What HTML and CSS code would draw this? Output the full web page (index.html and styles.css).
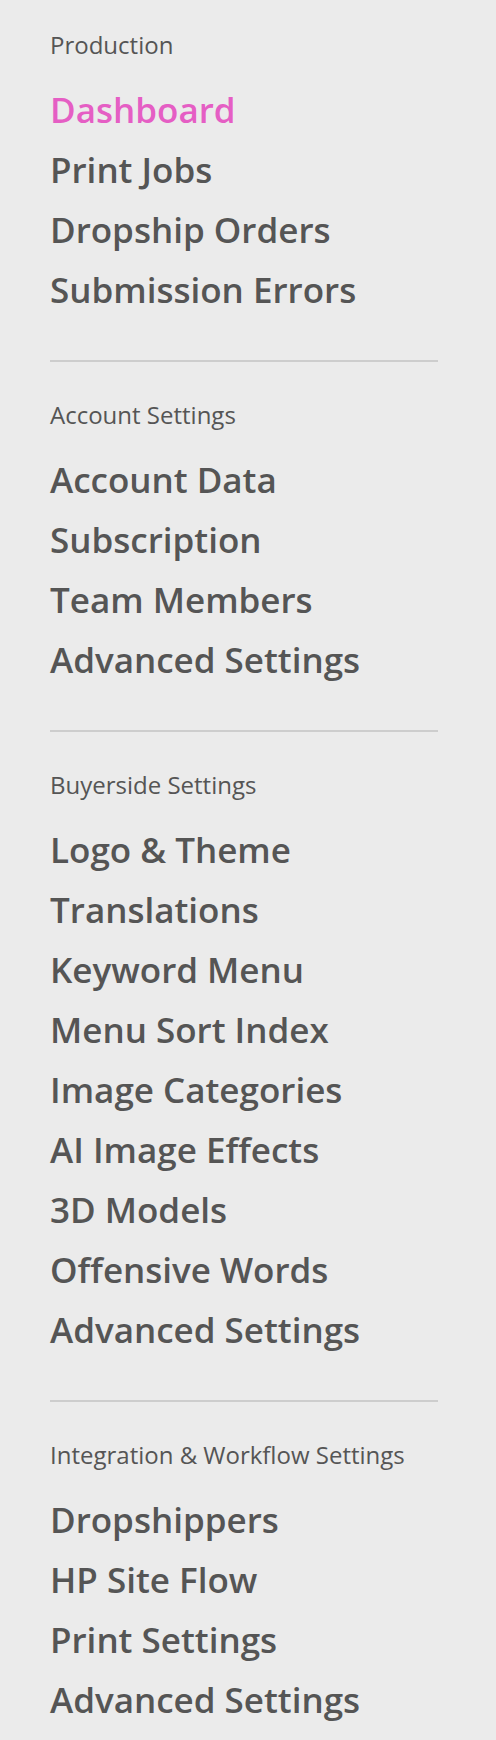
FILE: index.html
```html
<!DOCTYPE html>
<html lang="en">
<head>
<meta charset="UTF-8">
<meta name="viewport" content="width=device-width, initial-scale=1.0">
<title>Menu</title>
<link rel="stylesheet" href="styles.css">
</head>
<body>
    <nav class="sidebar">
        <section class="menu-group">
            <h2 class="menu-title">Production</h2>
            <ul class="menu-list">
                <li><a href="#" class="menu-link active">Dashboard</a></li>
                <li><a href="#" class="menu-link">Print Jobs</a></li>
                <li><a href="#" class="menu-link">Dropship Orders</a></li>
                <li><a href="#" class="menu-link">Submission Errors</a></li>
            </ul>
        </section>
        <section class="menu-group">
            <h2 class="menu-title">Account Settings</h2>
            <ul class="menu-list">
                <li><a href="#" class="menu-link">Account Data</a></li>
                <li><a href="#" class="menu-link">Subscription</a></li>
                <li><a href="#" class="menu-link">Team Members</a></li>
                <li><a href="#" class="menu-link">Advanced Settings</a></li>
            </ul>
        </section>
        <section class="menu-group">
            <h2 class="menu-title">Buyerside Settings</h2>
            <ul class="menu-list">
                <li><a href="#" class="menu-link">Logo &amp; Theme</a></li>
                <li><a href="#" class="menu-link">Translations</a></li>
                <li><a href="#" class="menu-link">Keyword Menu</a></li>
                <li><a href="#" class="menu-link">Menu Sort Index</a></li>
                <li><a href="#" class="menu-link">Image Categories</a></li>
                <li><a href="#" class="menu-link">AI Image Effects</a></li>
                <li><a href="#" class="menu-link">3D Models</a></li>
                <li><a href="#" class="menu-link">Offensive Words</a></li>
                <li><a href="#" class="menu-link">Advanced Settings</a></li>
            </ul>
        </section>
        <section class="menu-group">
            <h2 class="menu-title">Integration &amp; Workflow Settings</h2>
            <ul class="menu-list">
                <li><a href="#" class="menu-link">Dropshippers</a></li>
                <li><a href="#" class="menu-link">HP Site Flow</a></li>
                <li><a href="#" class="menu-link">Print Settings</a></li>
                <li><a href="#" class="menu-link">Advanced Settings</a></li>
            </ul>
        </section>
    </nav>
</body>
</html>
```

FILE: styles.css
```css
body {
  margin: 0;
  font-family: "Open Sans", "Noto Sans", sans-serif;
  background-color: #ebebeb;
  color: #555555;
}
.sidebar {
  padding: 30px 58px 40px 50px;
}
.menu-group {
  padding-bottom: 40px;
}
.menu-group + .menu-group {
  border-top: 2px solid #cdcdcd;
  padding-top: 38px;
}
.menu-title {
  font-size: 24px;
  font-weight: 400;
  line-height: 30px;
  margin: 0 0 20px 0;
  color: #555555;
}
.menu-list {
  list-style: none;
  margin: 0;
  padding: 0;
}
.menu-link {
  display: block;
  font-size: 35px;
  font-weight: 600;
  line-height: 60px;
  color: #555555;
  text-decoration: none;
}
.menu-link.active {
  color: #e55ec4;
}
```
